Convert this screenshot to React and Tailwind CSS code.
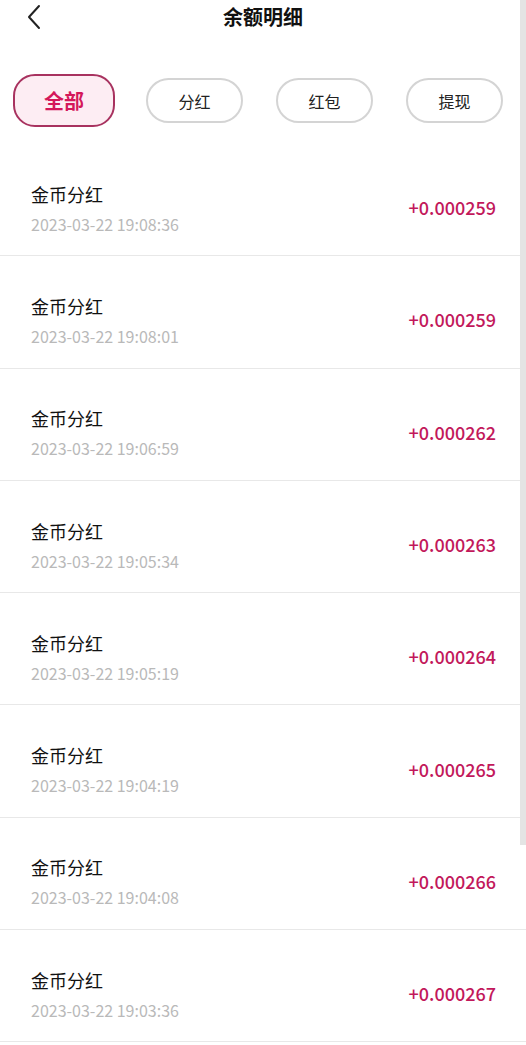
import React, { useState } from "react";

const records = [
  { time: "2023-03-22 19:08:36", amount: "+0.000259" },
  { time: "2023-03-22 19:08:01", amount: "+0.000259" },
  { time: "2023-03-22 19:06:59", amount: "+0.000262" },
  { time: "2023-03-22 19:05:34", amount: "+0.000263" },
  { time: "2023-03-22 19:05:19", amount: "+0.000264" },
  { time: "2023-03-22 19:04:19", amount: "+0.000265" },
  { time: "2023-03-22 19:04:08", amount: "+0.000266" },
  { time: "2023-03-22 19:03:36", amount: "+0.000267" },
];

const tabs = ["全部", "分红", "红包", "提现"];

const App = () => {
  const [active, setActive] = useState(0);

  return (
    <div
      className="relative w-[526px] min-h-[1045px] bg-white overflow-hidden"
      style={{ fontFamily: '"Noto Sans CJK SC", "Noto Sans", sans-serif' }}
    >
      {/* header */}
      <div className="relative h-[36px] flex items-center justify-center">
        <button className="absolute left-[24px] top-[4px] w-[20px] h-[26px] flex items-center justify-center">
          <svg width="16" height="26" viewBox="0 0 16 26" fill="none">
            <path d="M13 2 L3 13 L13 24" stroke="#222" strokeWidth="2" strokeLinecap="round" strokeLinejoin="round" />
          </svg>
        </button>
        <h1 className="text-[20px] font-bold text-[#111] leading-none mt-[-3px]">余额明细</h1>
      </div>

      {/* tabs */}
      <div className="flex items-center pl-[13px] pt-[38px] pb-[17px] h-[108px]">
        {tabs.map((t, i) =>
          i === active ? (
            <button
              key={t}
              onClick={() => setActive(i)}
              className="w-[102px] h-[53px] rounded-[22px] border-2 border-[#a8325f] bg-[#fdedf3] text-[20px] font-bold text-[#d4185a] flex items-center justify-center shrink-0"
            >
              {t}
            </button>
          ) : (
            <button
              key={t}
              onClick={() => setActive(i)}
              className={`${i === 1 ? "ml-[31px]" : "ml-[33px]"} w-[97px] h-[45px] rounded-full border-2 border-[#d4d4d4] bg-white text-[16px] text-[#222] flex items-center justify-center shrink-0`}
            >
              {t}
            </button>
          )
        )}
      </div>

      {/* list */}
      <div>
        {records.map((r, idx) => (
          <div
            key={idx}
            className="h-[112.3px] border-b border-[#e8e8e8] flex items-center justify-between pl-[31px] pr-[30px] pt-[16px]"
          >
            <div className="flex flex-col">
              <span className="text-[18px] leading-[28px] text-[#111]">金币分红</span>
              <span className="text-[16px] leading-[24px] text-[#b9b9b9] mt-[4px]">{r.time}</span>
            </div>
            <span className="text-[18px] font-medium text-[#c2185b]">{r.amount}</span>
          </div>
        ))}
      </div>

      {/* scroll indicator */}
      <div className="absolute right-0 top-0 w-[6px] h-[845px] bg-[#e4e4e4]" />
    </div>
  );
};

export default App;
